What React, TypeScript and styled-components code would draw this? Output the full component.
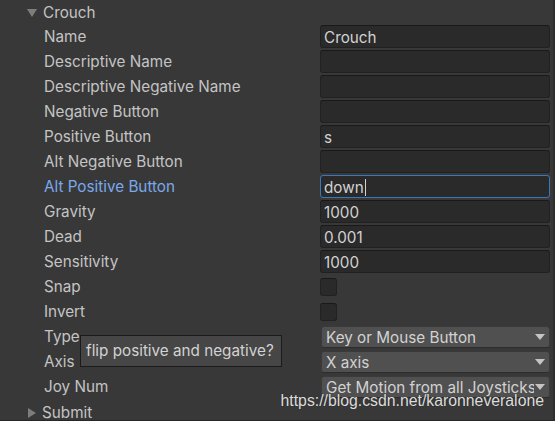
import React from "react"
import styled, { createGlobalStyle } from "styled-components"

const GlobalStyle = createGlobalStyle`
  html, body {
    margin: 0;
    padding: 0;
    background: #383838;
  }
  * {
    box-sizing: border-box;
  }
`

const Panel = styled.div`
  position: relative;
  width: 555px;
  height: 421px;
  overflow: hidden;
  background: #383838;
  border-right: 2px solid #2e2e2e;
  font-family: "Inter", "Noto Sans", sans-serif;
  font-size: 15.25px;
  color: #c4c4c4;
`

const Header = styled.div`
  display: flex;
  align-items: center;
  height: 25px;
  padding-left: 27px;
  gap: 6px;
`

const Triangle = styled.span<{ $open?: boolean }>`
  width: 0;
  height: 0;
  ${({ $open }) =>
    $open
      ? `border-left: 5px solid transparent;
         border-right: 5px solid transparent;
         border-top: 8px solid #7d7d7d;`
      : `border-top: 5px solid transparent;
         border-bottom: 5px solid transparent;
         border-left: 8px solid #7d7d7d;
         margin-left: 1px;`}
`

const Row = styled.div`
  display: grid;
  grid-template-columns: 276px 230px;
  align-items: start;
  height: 25px;
  padding-left: 44px;
`

const Label = styled.div<{ $focused?: boolean }>`
  height: 23px;
  line-height: 24px;
  white-space: nowrap;
  color: ${({ $focused }) => ($focused ? "#7aa9ec" : "#c4c4c4")};
`

const Field = styled.div<{ $focused?: boolean }>`
  height: 23px;
  padding: 0 3px;
  line-height: 23px;
  background: #2a2a2a;
  border: 1px solid ${({ $focused }) => ($focused ? "#3a78b8" : "#212121")};
  border-top-color: ${({ $focused }) => ($focused ? "#3a78b8" : "#191919")};
  border-radius: 3px;
  color: #d2d2d2;
  white-space: nowrap;
  overflow: hidden;
`

const Caret = styled.span`
  display: inline-block;
  width: 1px;
  height: 17px;
  margin-left: 1px;
  vertical-align: -3px;
  background: #d2d2d2;
`

const Checkbox = styled.div`
  width: 17px;
  height: 18px;
  margin-top: 3px;
  background: #2a2a2a;
  border: 1px solid #212121;
  border-top-color: #191919;
  border-radius: 3px;
`

const Dropdown = styled.div`
  display: flex;
  align-items: center;
  height: 22px;
  margin-top: 1px;
  margin-left: 1px;
  padding: 0 4px 0 4px;
  background: #505050;
  border: 1px solid #3a3a3a;
  border-bottom-color: #2c2c2c;
  border-radius: 3px;
  color: #d2d2d2;
  gap: 1px;
`

const DropdownText = styled.span`
  flex: 1;
  overflow: hidden;
  white-space: nowrap;
`

const DropArrow = styled.span`
  flex: none;
  width: 0;
  height: 0;
  border-left: 5px solid transparent;
  border-right: 5px solid transparent;
  border-top: 6px solid #c4c4c4;
`

const Tooltip = styled.div`
  position: absolute;
  left: 80px;
  top: 335px;
  width: 202px;
  height: 32px;
  padding-left: 5px;
  line-height: 30px;
  background: #464646;
  border: 1px solid #1b1b1b;
  color: #d2d2d2;
  white-space: nowrap;
`

const Watermark = styled.div`
  position: absolute;
  right: 9px;
  top: 392px;
  font-family: "Liberation Sans", Arial, sans-serif;
  font-size: 15.8px;
  color: #dcdcdc;
  text-shadow: 0 0 1px #2a2a2a;
`

const BottomLine = styled.div`
  position: absolute;
  left: 0;
  right: 0;
  bottom: 0;
  height: 1px;
  background: #262626;
`

type Prop =
  | { kind: "text"; label: string; value: string; focused?: boolean }
  | { kind: "check"; label: string }
  | { kind: "select"; label: string; value: string }

const props: Prop[] = [
  { kind: "text", label: "Name", value: "Crouch" },
  { kind: "text", label: "Descriptive Name", value: "" },
  { kind: "text", label: "Descriptive Negative Name", value: "" },
  { kind: "text", label: "Negative Button", value: "" },
  { kind: "text", label: "Positive Button", value: "s" },
  { kind: "text", label: "Alt Negative Button", value: "" },
  { kind: "text", label: "Alt Positive Button", value: "down", focused: true },
  { kind: "text", label: "Gravity", value: "1000" },
  { kind: "text", label: "Dead", value: "0.001" },
  { kind: "text", label: "Sensitivity", value: "1000" },
  { kind: "check", label: "Snap" },
  { kind: "check", label: "Invert" },
  { kind: "select", label: "Type", value: "Key or Mouse Button" },
  { kind: "select", label: "Axis", value: "X axis" },
  { kind: "select", label: "Joy Num", value: "Get Motion from all Joysticks" },
]

function Value({ p }: { p: Prop }) {
  if (p.kind === "check") return <Checkbox />
  if (p.kind === "select")
    return (
      <Dropdown>
        <DropdownText>{p.value}</DropdownText>
        <DropArrow />
      </Dropdown>
    )
  return (
    <Field $focused={p.focused}>
      {p.value}
      {p.focused ? <Caret /> : null}
    </Field>
  )
}

export default function App() {
  return (
    <>
      <GlobalStyle />
      <Panel>
        <Header>
          <Triangle $open />
          <span>Crouch</span>
        </Header>
        {props.map(p => (
          <Row key={p.label}>
            <Label $focused={p.kind === "text" && p.focused}>{p.label}</Label>
            <Value p={p} />
          </Row>
        ))}
        <Header>
          <Triangle />
          <span>Submit</span>
        </Header>
        <Tooltip>flip positive and negative?</Tooltip>
        <Watermark>https://blog.csdn.net/karonneveralone</Watermark>
        <BottomLine />
      </Panel>
    </>
  )
}
